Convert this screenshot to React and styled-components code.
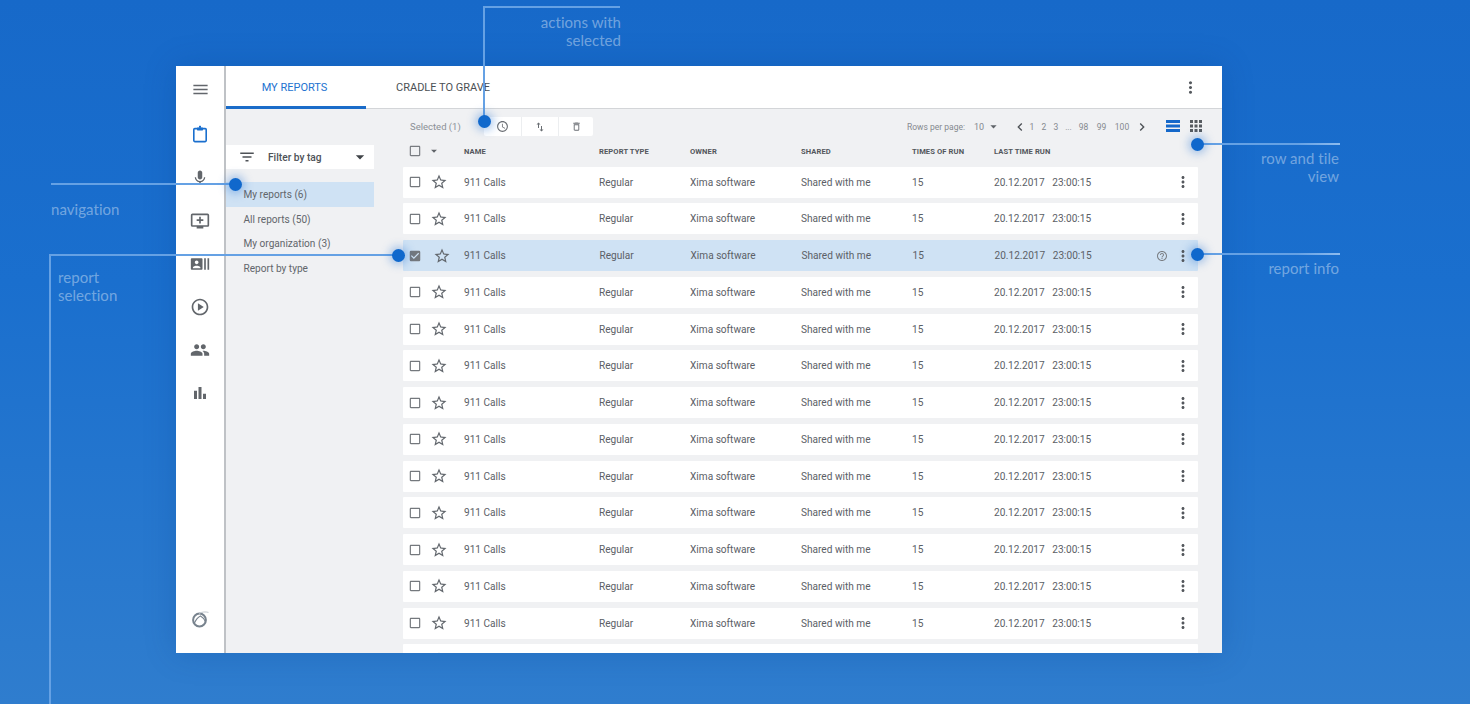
import React from "react";
import styled, { createGlobalStyle } from "styled-components";
import {
  MdMenu, MdMic, MdAddToQueue, MdRecentActors, MdOutlinePlayCircle,
  MdPeople, MdBarChart, MdFilterList, MdArrowDropDown, MdCheckBoxOutlineBlank, MdCheckBox,
  MdStarBorder, MdMoreVert, MdAccessTime, MdImportExport, MdDeleteOutline, MdChevronLeft,
  MdChevronRight, MdHelpOutline, MdApps,
} from "react-icons/md";

const Global = createGlobalStyle`
  html, body { margin: 0; padding: 0; }
  body { font-family: Roboto, "Liberation Sans", sans-serif; }
  * { box-sizing: border-box; }
`;

const LINE = "#65a1e4";
const INK = "#5b6066";
const ROW_COLS = "61px 135px 91px 111px 111px 82px 140px 1fr";

const Page = styled.div`
  position: relative;
  width: 1470px;
  height: 704px;
  overflow: hidden;
  padding: 66px 0 0 176px;
  background: linear-gradient(180deg, #1769c9 0%, #1a6fce 40%, #2f7dce 100%);
`;
const Window = styled.div`
  display: flex;
  width: 1046px;
  height: 587px;
  background: #f0f1f3;
  overflow: hidden;
  box-shadow: 0 0 30px rgba(10, 60, 130, 0.22);
`;
const Sidebar = styled.nav`
  flex: 0 0 50px;
  display: flex;
  flex-direction: column;
  align-items: center;
  padding: 2px 0 25px;
  background: #fff;
  border-right: 2px solid #bfc2c6;
`;
const NavIcon = styled.div`
  flex: 0 0 43px;
  display: flex;
  align-items: center;
  justify-content: center;
  color: ${(p) => (p.$active ? "#1a6fce" : "#62666b")};
  margin-bottom: ${(p) => (p.$first ? "2px" : "0")};
`;
const Logo = styled.div`
  margin-top: auto;
  display: flex;
  height: 18px;
`;
const Content = styled.div`
  flex: 1;
  display: flex;
  flex-direction: column;
  min-width: 0;
`;
const Tabs = styled.div`
  flex: 0 0 43px;
  display: flex;
  align-items: stretch;
  background: #fff;
  border-bottom: 1px solid #d3d5d8;
`;
const Tab = styled.div`
  width: ${(p) => (p.$active ? "140px" : "154px")};
  display: flex;
  align-items: center;
  justify-content: center;
  font-size: 11px;
  padding: ${(p) => (p.$active ? "2px 3px 0 0" : "2px 0 0")};
  color: ${(p) => (p.$active ? "#2272d0" : "#4b4f54")};
  border-bottom: 3px solid ${(p) => (p.$active ? "#1a6cc9" : "transparent")};
  margin-bottom: -1px;
`;
const TabMenu = styled.div`
  margin-left: auto;
  width: 64px;
  display: flex;
  align-items: center;
  justify-content: center;
  color: #55595e;
`;
const Body = styled.div`
  flex: 1;
  display: flex;
  min-height: 0;
`;
const Filters = styled.aside`
  flex: 0 0 148px;
  margin-right: 29px;
  padding-top: 36px;
`;
const FilterButton = styled.div`
  display: flex;
  align-items: center;
  height: 24px;
  padding-left: 12px;
  background: #fff;
  color: #4e5257;
  font-size: 10.2px;
  font-weight: 500;
  & > span { margin-left: 12px; }
  & > svg:last-child { margin-left: auto; margin-right: 4px; color: #3f4347; }
`;
const FilterList = styled.div`
  margin-top: 13px;
`;
const FilterItem = styled.div`
  height: 24.5px;
  display: flex;
  align-items: center;
  padding: 0.5px 0 0 17.5px;
  font-size: 10.1px;
  color: #62666b;
  background: ${(p) => (p.$active ? "#cfe2f4" : "transparent")};
`;
const Main = styled.main`
  flex: 1;
  margin-right: 24px;
  min-width: 0;
`;
const Toolbar = styled.div`
  display: flex;
  align-items: center;
  height: 27px;
  padding: 8px 0 0 7px;
`;
const Selected = styled.div`
  width: 74px;
  font-size: 9.5px;
  color: #8b9096;
`;
const Actions = styled.div`
  display: flex;
  height: 19px;
  background: #fff;
  border-radius: 2px;
`;
const ActionButton = styled.div`
  width: 37px;
  display: flex;
  align-items: center;
  justify-content: center;
  color: #6a6e73;
  & + & { border-left: 1px solid #eceef0; }
  &:last-child { width: 35px; }
`;
const Pager = styled.div`
  margin-left: auto;
  display: flex;
  align-items: center;
  color: #85898f;
  font-size: 8.5px;
`;
const PagerLabel = styled.span`
  width: 67px;
`;
const PagerSize = styled.span`
  display: flex;
  align-items: center;
  width: 38px;
  font-size: 9px;
  & > svg { margin-left: 2px; color: #5f6368; }
`;
const PagerNum = styled.span`
  text-align: center;
  width: ${(p) => p.$w || 12}px;
`;
const Chevron = styled.span`
  display: flex;
  color: #4d5156;
  margin: ${(p) => p.$m};
`;
const ViewSwitch = styled.div`
  display: flex;
  align-items: center;
  margin: 0 -7px 2px 16px;
  gap: 7px;
`;
const RowViewIcon = styled.svg`
  display: block;
`;
const TileIcon = styled.span`
  display: flex;
  color: #575b60;
`;
const HeaderRow = styled.div`
  display: grid;
  grid-template-columns: ${ROW_COLS};
  align-items: center;
  height: 30.5px;
  font-size: 7.6px;
  font-weight: 700;
  letter-spacing: 0.1px;
  color: #53575c;
`;
const CheckCell = styled.div`
  display: flex;
  align-items: center;
  color: #777b80;
  padding-left: 5px;
  & > svg:last-child { margin-left: 5px; color: #5f6368; }
`;
const Rows = styled.div`
  display: flex;
  flex-direction: column;
  gap: 5.75px;
`;
const Row = styled.div`
  flex: 0 0 31px;
  display: grid;
  grid-template-columns: ${ROW_COLS};
  align-items: center;
  font-size: 10.1px;
  color: ${INK};
  border-radius: 1px;
  background: ${(p) => (p.$selected ? "#cfe2f4" : "#fff")};
`;
const RowLead = styled.div`
  display: flex;
  align-items: center;
  padding-left: 5px;
  color: #74787d;
  & > svg:last-child {
    margin-left: ${(p) => (p.$selected ? "11px" : "8px")};
    color: #62676d;
  }
`;
const RowEnd = styled.div`
  display: flex;
  align-items: center;
  justify-content: flex-end;
  padding-right: 6px;
  color: #54585d;
  gap: 6px;
`;
const Help = styled.span`
  display: flex;
  color: #7a7e83;
`;
const Cell = styled.div`
  white-space: pre;
  transform: translateX(${(p) => (p.$selected ? "0.5px" : "0")});
`;

const HLine = styled.div`
  position: absolute;
  left: ${(p) => p.$x}px;
  top: ${(p) => p.$y}px;
  width: ${(p) => p.$w}px;
  height: 2px;
  background: ${(p) =>
    p.$fade
      ? `linear-gradient(90deg, ${LINE} 0%, ${LINE} 70%, #8dbbee 100%)`
      : LINE};
`;
const VLine = styled.div`
  position: absolute;
  left: ${(p) => p.$x}px;
  top: ${(p) => p.$y}px;
  height: ${(p) => p.$h}px;
  width: 2px;
  background: ${LINE};
`;
const Dot = styled.div`
  position: absolute;
  left: ${(p) => p.$x - 6.5}px;
  top: ${(p) => p.$y - 6.5}px;
  width: 13px;
  height: 13px;
  border-radius: 50%;
  background: #1068cc;
  box-shadow: 0 0 9px 3px rgba(30, 110, 210, 0.35);
`;
const Note = styled.div`
  position: absolute;
  top: ${(p) => p.$y}px;
  ${(p) => (p.$right !== undefined ? `right: ${1470 - p.$right}px; text-align: right;` : `left: ${p.$left}px;`)}
  font-family: Lato, "Open Sans", sans-serif;
  font-size: 15px;
  line-height: 18px;
  letter-spacing: 0.05px;
  color: rgba(255, 255, 255, 0.4);
  white-space: pre;
`;

const navIcons = [MdRecentActors, MdOutlinePlayCircle, MdPeople];
const cols = ["Regular", "Xima software", "Shared with me", "15", "20.12.2017   23:00:15"];
const rows = Array.from({ length: 14 }, (_, i) => i);

const ClipboardIcon = () => (
  <svg width="20" height="20" viewBox="0 0 20 20" fill="none">
    <rect x="3.8" y="3.6" width="12.4" height="13" rx="1" stroke="currentColor" strokeWidth="1.6" />
    <rect x="7" y="2.4" width="6" height="3" rx="0.6" fill="currentColor" />
    <rect x="9" y="0.8" width="2" height="2" fill="currentColor" />
  </svg>
);

const XimaLogo = () => (
  <svg width="18" height="18" viewBox="0 0 18 18" fill="none">
    <circle cx="8.5" cy="10" r="6.4" stroke="#78838e" strokeWidth="2" />
    <path d="M3.4 13 C5 9.5 7.5 7 9.5 6 C11.5 7 13.5 9.5 14.6 12" stroke="#78838e" strokeWidth="1.2" />
    <path d="M8 3.4 C11 1.8 14.5 1.6 17.5 2.4" stroke="#c3c9cf" strokeWidth="1" />
  </svg>
);

export default function App() {
  return (
    <Page>
      <Global />
      <Window>
        <Sidebar>
          <NavIcon $first><MdMenu size={19} /></NavIcon>
          <NavIcon $active><ClipboardIcon /></NavIcon>
          <NavIcon><MdMic size={18} /></NavIcon>
          <NavIcon><MdAddToQueue size={20} /></NavIcon>
          {navIcons.map((I, i) => (
            <NavIcon key={i}><I size={20} /></NavIcon>
          ))}
          <NavIcon><MdBarChart size={18} /></NavIcon>
          <Logo><XimaLogo /></Logo>
        </Sidebar>
        <Content>
          <Tabs>
            <Tab $active>MY REPORTS</Tab>
            <Tab>CRADLE TO GRAVE</Tab>
            <TabMenu><MdMoreVert size={19} /></TabMenu>
          </Tabs>
          <Body>
            <Filters>
              <FilterButton>
                <MdFilterList size={18} />
                <span>Filter by tag</span>
                <MdArrowDropDown size={20} />
              </FilterButton>
              <FilterList>
                <FilterItem $active>My reports (6)</FilterItem>
                <FilterItem>All reports (50)</FilterItem>
                <FilterItem>My organization (3)</FilterItem>
                <FilterItem>Report by type</FilterItem>
              </FilterList>
            </Filters>
            <Main>
              <Toolbar>
                <Selected>Selected (1)</Selected>
                <Actions>
                  <ActionButton><MdAccessTime size={13} /></ActionButton>
                  <ActionButton><MdImportExport size={12} /></ActionButton>
                  <ActionButton><MdDeleteOutline size={11} /></ActionButton>
                </Actions>
                <Pager>
                  <PagerLabel>Rows per page:</PagerLabel>
                  <PagerSize>10<MdArrowDropDown size={15} /></PagerSize>
                  <Chevron $m="0 -2px 0 0"><MdChevronLeft size={16} /></Chevron>
                  <PagerNum>1</PagerNum>
                  <PagerNum>2</PagerNum>
                  <PagerNum>3</PagerNum>
                  <PagerNum $w={13}>...</PagerNum>
                  <PagerNum $w={17}>98</PagerNum>
                  <PagerNum $w={19}>99</PagerNum>
                  <PagerNum $w={22}>100</PagerNum>
                  <Chevron $m="0 0 0 1px"><MdChevronRight size={16} /></Chevron>
                  <ViewSwitch>
                    <RowViewIcon width="14" height="12" viewBox="0 0 14 12">
                      <rect width="14" height="3" fill="#1468ca" />
                      <rect y="4.5" width="14" height="3" fill="#1468ca" />
                      <rect y="9" width="14" height="3" fill="#1468ca" />
                    </RowViewIcon>
                    <TileIcon><MdApps size={18} /></TileIcon>
                  </ViewSwitch>
                </Pager>
              </Toolbar>
              <HeaderRow>
                <CheckCell>
                  <MdCheckBoxOutlineBlank size={14} />
                  <MdArrowDropDown size={14} />
                </CheckCell>
                <div>NAME</div>
                <div>REPORT TYPE</div>
                <div>OWNER</div>
                <div>SHARED</div>
                <div>TIMES OF RUN</div>
                <div>LAST TIME RUN</div>
              </HeaderRow>
              <Rows>
                {rows.map((i) => {
                  const selected = i === 2;
                  const clipped = i === rows.length - 1;
                  return (
                    <Row key={i} $selected={selected}>
                      <RowLead $selected={selected}>
                        {selected ? <MdCheckBox size={14} /> : <MdCheckBoxOutlineBlank size={14} />}
                        <MdStarBorder size={18} />
                      </RowLead>
                      {!clipped && <Cell>911 Calls</Cell>}
                      {!clipped && cols.map((c) => (
                        <Cell key={c} $selected={selected}>{c}</Cell>
                      ))}
                      {!clipped && (
                        <RowEnd>
                          {selected && <Help><MdHelpOutline size={12} /></Help>}
                          <MdMoreVert size={18} />
                        </RowEnd>
                      )}
                    </Row>
                  );
                })}
              </Rows>
            </Main>
          </Body>
        </Content>
      </Window>

      <HLine $x={483} $y={6} $w={137} />
      <VLine $x={482.5} $y={6} $h={115} />
      <Dot $x={484} $y={121} />
      <Note $right={621} $y={13}>{"actions with\nselected"}</Note>

      <HLine $x={51} $y={183} $w={184} />
      <Dot $x={235} $y={184} />
      <Note $left={51} $y={200}>navigation</Note>

      <HLine $x={49} $y={254} $w={349} />
      <VLine $x={49} $y={254} $h={450} />
      <Dot $x={398} $y={255} />
      <Note $left={58} $y={268}>{"report\nselection"}</Note>

      <HLine $x={1197} $y={143} $w={143} $fade />
      <Dot $x={1197} $y={144} />
      <Note $right={1339} $y={149}>{"row and tile\nview"}</Note>

      <HLine $x={1197} $y={253} $w={143} $fade />
      <Dot $x={1197} $y={254} />
      <Note $right={1339} $y={259}>report info</Note>
    </Page>
  );
}
